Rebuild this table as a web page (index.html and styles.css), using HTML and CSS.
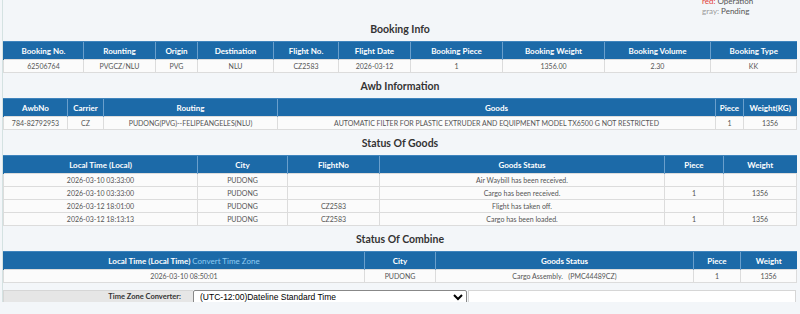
FILE: index.html
```html
<!DOCTYPE html>
<html>
<head>
<meta charset="utf-8">
<link rel="stylesheet" href="styles.css">
</head>
<body>
<div class="page">
  <div class="legend">
    <div><span class="red">red:</span> Operation</div>
    <div><span class="gray">gray:</span> Pending</div>
  </div>

  <div class="title">Booking Info</div>
  <table class="grid">
    <colgroup><col style="width:80px"><col style="width:72px"><col style="width:42px"><col style="width:76px"><col style="width:65px"><col style="width:72px"><col style="width:92px"><col style="width:102px"><col style="width:106px"><col style="width:86px"></colgroup>
    <tr class="head"><th>Booking No.</th><th>Rounting</th><th>Origin</th><th>Destination</th><th>Flight No.</th><th>Flight Date</th><th>Booking Piece</th><th>Booking Weight</th><th>Booking Volume</th><th>Booking Type</th></tr>
    <tr><td>62506764</td><td>PVGCZ/NLU</td><td>PVG</td><td>NLU</td><td>CZ2583</td><td>2026-03-12</td><td>1</td><td>1356.00</td><td>2.30</td><td>KK</td></tr>
  </table>

  <div class="title">Awb Information</div>
  <table class="grid">
    <colgroup><col style="width:64px"><col style="width:36px"><col style="width:174px"><col style="width:438px"><col style="width:28px"><col style="width:53px"></colgroup>
    <tr class="head"><th>AwbNo</th><th>Carrier</th><th>Routing</th><th>Goods</th><th>Piece</th><th>Weight(KG)</th></tr>
    <tr><td>784-82792953</td><td>CZ</td><td>PUDONG(PVG)--FELIPEANGELES(NLU)</td><td>AUTOMATIC FILTER FOR PLASTIC EXTRUDER AND EQUIPMENT MODEL TX6500 G NOT RESTRICTED</td><td>1</td><td>1356</td></tr>
  </table>

  <div class="title">Status Of Goods</div>
  <table class="grid">
    <colgroup><col style="width:194px"><col style="width:90px"><col style="width:92px"><col style="width:285px"><col style="width:59px"><col style="width:73px"></colgroup>
    <tr class="head"><th>Local Time (Local)</th><th>City</th><th>FlightNo</th><th>Goods Status</th><th>Piece</th><th>Weight</th></tr>
    <tr><td>2026-03-10 03:33:00</td><td>PUDONG</td><td></td><td>Air Waybill has been received.</td><td></td><td></td></tr>
    <tr><td>2026-03-10 03:33:00</td><td>PUDONG</td><td></td><td>Cargo has been received.</td><td>1</td><td>1356</td></tr>
    <tr><td>2026-03-12 18:01:00</td><td>PUDONG</td><td>CZ2583</td><td>Flight has taken off.</td><td></td><td></td></tr>
    <tr><td>2026-03-12 18:13:13</td><td>PUDONG</td><td>CZ2583</td><td>Cargo has been loaded.</td><td>1</td><td>1356</td></tr>
  </table>

  <div class="title">Status Of Combine</div>
  <table class="grid">
    <colgroup><col style="width:361px"><col style="width:71px"><col style="width:258px"><col style="width:47px"><col style="width:56px"></colgroup>
    <tr class="head"><th>Local Time (Local Time) <span class="conv">Convert Time Zone</span></th><th>City</th><th>Goods Status</th><th>Piece</th><th>Weight</th></tr>
    <tr><td>2026-03-10 08:50:01</td><td>PUDONG</td><td>Cargo Assembly.&nbsp;&nbsp;&nbsp;(PMC44489CZ)</td><td>1</td><td>1356</td></tr>
  </table>

  <div class="tz">
    <div class="tz-label">Time Zone Converter:</div>
    <select class="tz-select"><option>(UTC-12:00)Dateline Standard Time</option></select>
    <div class="tz-rest"></div>
  </div>
</div>
</body>
</html>
```

FILE: styles.css
```css
html, body {
  margin: 0;
  padding: 0;
  background: #f3f6f9;
}
body {
  font-family: Lato, "Open Sans", sans-serif;
  color: #555;
  overflow: hidden;
}
.page {
  margin-left: 2px;
  width: 794px;
  border-left: 1px solid #d4e2e2;
  height: 306px;
}
.legend {
  margin-top: -4px;
  padding-left: 699px;
  font-size: 8px;
  line-height: 10px;
  color: #555;
  height: 20px;
}
.legend .red { color: #e2403a; }
.legend .gray { color: #999; }
.title {
  height: 23px;
  padding-top: 2px;
  line-height: 23px;
  text-align: center;
  font-weight: bold;
  font-size: 10.5px;
  color: #333;
}
.grid {
  width: 793px;
  border-collapse: collapse;
  table-layout: fixed;
}
.grid th {
  height: 17px;
  padding: 0;
  line-height: 12px;
  background: #1c6aa8;
  color: #fff;
  font-size: 8px;
  font-weight: bold;
  border-left: 1px solid #6a9fcc;
  border-top: 1px solid #3f84bd;
  text-align: center;
  white-space: nowrap;
  overflow: hidden;
}
.grid th:first-child { border-left: 1px solid #1c6aa8; }
.grid td {
  height: 12px;
  padding: 0;
  line-height: 11px;
  background: #fbfbfb;
  border: 1px solid #dcdcdc;
  font-size: 7px;
  color: #555;
  text-align: center;
  white-space: nowrap;
  overflow: hidden;
}
.conv {
  font-weight: normal;
  color: #8fcbf3;
}
.tz {
  margin-top: 7px;
  display: flex;
  height: 14px;
  width: 793px;
}
.tz-label {
  width: 190px;
  background: #e6e6e6;
  border: 1px solid #d6d6d6;
  border-right: none;
  font-size: 7.5px;
  font-weight: bold;
  color: #333;
  text-align: right;
  line-height: 12px;
  padding-right: 12px;
  box-sizing: border-box;
}
.tz-select {
  width: 274px;
  height: 14px;
  margin: 0;
  padding: 0 0 0 2px;
  font-family: "Liberation Sans", Arial, sans-serif;
  font-size: 8.5px;
  line-height: 12px;
  color: #000;
  background: #fff;
  border: 1px solid #888;
  border-radius: 2px;
  box-sizing: border-box;
}
.tz-rest {
  flex: 1;
  background: #fff;
  border: 1px solid #d6d6d6;
  margin-left: 1px;
}
```
